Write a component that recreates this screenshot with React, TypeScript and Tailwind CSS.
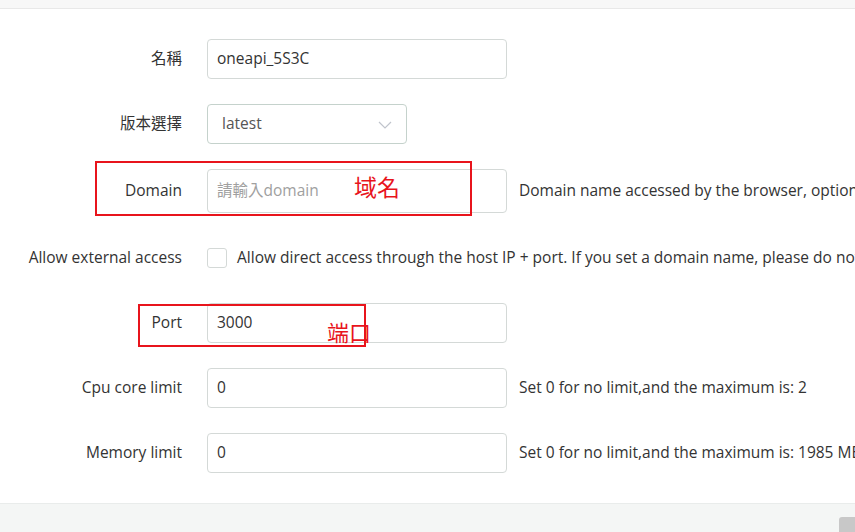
const font = { fontFamily: '"Open Sans", "Noto Sans CJK TC", sans-serif' }

function Row({ label, children, hint }: { label: string; children: React.ReactNode; hint?: string }) {
    return (
        <div className="flex items-center">
            <div className="w-[182px] shrink-0 text-right text-[15.5px] text-[#333]">{label}</div>
            <div className="ml-[25px] shrink-0">{children}</div>
            {hint && <div className="ml-[12px] text-[15.5px] text-[#333]">{hint}</div>}
        </div>
    )
}

function TextInput({ value, placeholder, tall }: { value?: string; placeholder?: string; tall?: boolean }) {
    return (
        <div
            className={`flex w-[300px] items-center rounded-[4px] border border-[#d4d9d7] bg-white pl-[9px] text-[15.5px] ${tall ? "h-[44px]" : "h-[40px]"}`}
        >
            {value ? <span className="text-[#333]">{value}</span> : <span className="text-[#a0a0a0]">{placeholder}</span>}
        </div>
    )
}

export default function App() {
    return (
        <div className="relative h-[532px] w-[855px] overflow-hidden whitespace-nowrap bg-white" style={font}>
            <div className="h-[9px] border-b border-[#e8e8e8] bg-[#f7f7f7]" />

            <div className="flex flex-col gap-[25px] pb-[30px] pt-[30px]">
                <Row label="名稱">
                    <TextInput value="oneapi_5S3C" />
                </Row>
                <Row label="版本選擇">
                    <div className="flex h-[40px] w-[200px] items-center justify-between rounded-[4px] border border-[#c5d2cc] pl-[14px] pr-[14px] text-[15.5px] text-[#555]">
                        <span>latest</span>
                        <svg width="14" height="8" viewBox="0 0 14 8" fill="none" className="mt-[1px]">
                            <polyline points="1,1 7,7 13,1" stroke="#c0c4cc" strokeWidth="1.2" />
                        </svg>
                    </div>
                </Row>
                <Row label="Domain" hint="Domain name accessed by the browser, optional">
                    <TextInput placeholder="請輸入domain" tall />
                </Row>
                <div className="flex h-[40px] items-center">
                    <div className="w-[182px] shrink-0 text-right text-[15.5px] text-[#333]">Allow external access</div>
                    <div className="ml-[25px] h-[20px] w-[20px] shrink-0 rounded-[3px] border border-[#d4d9d7] bg-white" />
                    <div className="ml-[10px] text-[15.5px] text-[#333]">
                        Allow direct access through the host IP + port. If you set a domain name, please do not check
                    </div>
                </div>
                <Row label="Port">
                    <TextInput value="3000" />
                </Row>
                <Row label="Cpu core limit" hint="Set 0 for no limit,and the maximum is: 2">
                    <TextInput value="0" />
                </Row>
                <Row label="Memory limit" hint="Set 0 for no limit,and the maximum is: 1985 MB">
                    <TextInput value="0" />
                </Row>
            </div>

            <div className="relative h-[29px] border-t border-[#e9eceb] bg-[#f4f6f5]">
                <div className="absolute bottom-0 right-0 h-[15px] w-[16px] rounded-tl-[3px] bg-[#c8c8c8]" />
            </div>

            {/* annotations */}
            <div className="absolute left-[95px] top-[161px] h-[55px] w-[377px] border-2 border-[#e8141c]" />
            <div className="absolute left-[354px] top-[176px] text-[23px] leading-none text-[#e8141c]">域名</div>
            <div className="absolute left-[138px] top-[304px] h-[43px] w-[228px] border-2 border-[#e8141c]" />
            <div className="absolute left-[327px] top-[321px] text-[22px] leading-none text-[#e8141c]">端口</div>
        </div>
    )
}
